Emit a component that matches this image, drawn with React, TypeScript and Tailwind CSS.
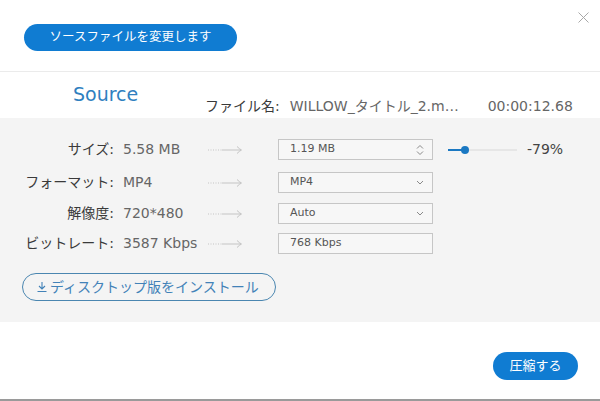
import React from "react";

const font = "font-['DejaVu_Sans','Noto_Sans_CJK_JP',sans-serif]";

function Arrow() {
  return (
    <svg width="35" height="10" viewBox="0 0 35 10" className="shrink-0">
      <line x1="0" y1="5" x2="14" y2="5" stroke="#c4c4c4" strokeWidth="1" strokeDasharray="1 1.5" />
      <line x1="14" y1="5" x2="33" y2="5" stroke="#c4c4c4" strokeWidth="1" />
      <path d="M29 1.5 Q31.5 4 33.5 5 Q31.5 6 29 8.5" fill="none" stroke="#c4c4c4" strokeWidth="1" />
    </svg>
  );
}

function Chevron() {
  return (
    <svg width="8" height="5" viewBox="0 0 8 5">
      <path d="M1 1 L4 4 L7 1" fill="none" stroke="#8a8a8a" strokeWidth="1" />
    </svg>
  );
}

function Spinner() {
  return (
    <svg width="8" height="12" viewBox="0 0 8 12">
      <path d="M1 4.5 L4 1.5 L7 4.5 M1 7.5 L4 10.5 L7 7.5" fill="none" stroke="#8a8a8a" strokeWidth="1" />
    </svg>
  );
}

function Row({
  label,
  value,
  box,
  icon,
  className = "",
  children,
}: {
  label: string;
  value: string;
  box: string;
  icon?: React.ReactNode;
  className?: string;
  children?: React.ReactNode;
}) {
  return (
    <div className={`flex items-center h-[21px] ${className}`}>
      <div className="w-[114px] text-right text-[14px] text-[#3a3a3a] whitespace-nowrap">{label}</div>
      <div className="w-[85px] ml-[9px] text-[14px] text-[#666] whitespace-nowrap">{value}</div>
      <Arrow />
      <div className="ml-[35px] w-[155px] h-[21px] border border-[#c6c6c6] bg-[#f7f7f7] flex items-center justify-between pl-[11px] pr-[8px]">
        <span className="text-[11px] text-[#555]">{box}</span>
        {icon}
      </div>
      {children}
    </div>
  );
}

export default function App() {
  return (
    <div className={`w-[600px] h-[401px] bg-white flex flex-col relative ${font}`}>
      {/* close */}
      <svg width="11" height="11" viewBox="0 0 11 11" className="absolute top-[12px] right-[11px]">
        <path d="M0.5 0.5 L10.5 10.5 M10.5 0.5 L0.5 10.5" stroke="#a8a8a8" strokeWidth="1" />
      </svg>

      <div className="h-[71px] pt-[24px] pl-[24px]">
        <button className="w-[213px] h-[27px] rounded-full bg-[#107cd2] text-white text-[12.5px] flex items-center justify-center">
          ソースファイルを変更します
        </button>
      </div>
      <div className="h-px bg-[#ebebeb]" />

      <div className="h-[46px] flex">
        <div className="pl-[73px] pt-[10px] w-[205px] text-[19px] leading-[24px] text-[#2f80bf]">Source</div>
        <div className="pt-[24px] flex text-[14px] leading-[20px] whitespace-nowrap">
          <span className="text-[#3a3a3a]">ファイル名:</span>
          <span className="ml-[10px] text-[#666]">WILLOW_タイトル_2.m…</span>
          <span className="ml-[29px] text-[#666]">00:00:12.68</span>
        </div>
      </div>

      <div className="h-[204px] bg-[#f4f4f4] pt-[21px] flex flex-col">
        <Row label="サイズ:" value="5.58 MB" box="1.19 MB" icon={<Spinner />}>
          <div className="ml-[15px] w-[69px] h-[8px] relative flex items-center">
            <div className="w-full h-[2px] bg-[#e6e6e6]" />
            <div className="absolute left-0 w-[17px] h-[2px] bg-[#1a78c2]" />
            <div className="absolute left-[13px] w-[8px] h-[8px] rounded-full bg-[#1a78c2]" />
          </div>
          <span className="ml-[10px] text-[14px] text-[#444]">-79%</span>
        </Row>
        <Row label="フォーマット:" value="MP4" box="MP4" icon={<Chevron />} className="mt-[12px]" />
        <Row label="解像度:" value="720*480" box="Auto" icon={<Chevron />} className="mt-[10px]" />
        <Row label="ビットレート:" value="3587 Kbps" box="768 Kbps" className="mt-[9px]" />

        <div className="mt-[19px] pl-[22px]">
          <button className="w-[254px] h-[28px] rounded-full border border-[#4a86b0] flex items-center pl-[13px] text-[14px] text-[#4282b8]">
            <svg width="12" height="12" viewBox="0 0 12 12" className="mr-[2px]">
              <path d="M6 1 V8 M3 5 L6 8 L9 5 M1.5 10.5 H10.5" fill="none" stroke="#4282b8" strokeWidth="1.1" />
            </svg>
            ディスクトップ版をインストール
          </button>
        </div>
      </div>

      <div className="flex-1 flex justify-end items-start pt-[30px] pr-[22px]">
        <button className="w-[85px] h-[28px] rounded-full bg-[#107cd2] text-white text-[13px] flex items-center justify-center">
          圧縮する
        </button>
      </div>
      <div className="h-[2px] bg-[#9a9a9a]" />
    </div>
  );
}
